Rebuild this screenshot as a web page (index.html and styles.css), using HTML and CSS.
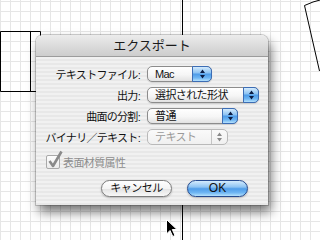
FILE: index.html
```html
<!DOCTYPE html>
<html lang="ja">
<head>
<meta charset="UTF-8" />
<title>エクスポート</title>
<link rel="stylesheet" href="styles.css">
</head>
<body>
<div class="desk">
    <!-- drawing on the canvas -->
    <svg class="drawing" width="320" height="240" viewBox="0 0 320 240">
        <path d="M0.5 31.5 H40.5 V91.5 H0.5 Z M30.5 31.5 V91.5" />
        <path d="M182.5 0 V240" />
        <path d="M304.5 5.5 L313 2 L320 0 M304.5 5.5 L319.5 71" />
    </svg>

    <div class="dialog">
        <div class="titlebar">エクスポート</div>
        <div class="sheet">
            <div class="form">
                <label>テキストファイル:</label>
                <div class="popup w-mac"><span>Mac</span><i class="gem wide"><svg width="7" height="10" viewBox="0 0 7 10"><path d="M3.5 0.5 L6 4 H1 Z M3.5 9.5 L6 6 H1 Z"/></svg></i></div>

                <label>出力:</label>
                <div class="popup w-out"><span>選択された形状</span><i class="gem"><svg width="7" height="10" viewBox="0 0 7 10"><path d="M3.5 0.5 L6 4 H1 Z M3.5 9.5 L6 6 H1 Z"/></svg></i></div>

                <label>曲面の分割:</label>
                <div class="popup w-div"><span>普通</span><i class="gem"><svg width="7" height="10" viewBox="0 0 7 10"><path d="M3.5 0.5 L6 4 H1 Z M3.5 9.5 L6 6 H1 Z"/></svg></i></div>

                <label>バイナリ／テキスト:</label>
                <div class="popup w-bin off"><span>テキスト</span><i class="gem"><svg width="7" height="10" viewBox="0 0 7 10"><path d="M3.5 0.5 L6 4 H1 Z M3.5 9.5 L6 6 H1 Z"/></svg></i></div>
            </div>

            <label class="check">
                <span class="box"><svg width="16" height="19" viewBox="0 0 16 19"><path d="M2.5 11 L6 16 L14.5 1.5" /></svg></span>
                表面材質属性
            </label>

            <div class="buttons">
                <button class="btn">キャンセル</button>
                <button class="btn default">OK</button>
            </div>
        </div>
    </div>

    <svg class="cursor" width="12" height="19" viewBox="0 0 12 19">
        <path d="M0.5 0.5 V15 L4 11.5 L6.8 17.5 L9 16.5 L6.3 10.5 H11 Z" />
    </svg>
</div>
</body>
</html>
```

FILE: styles.css
```css
:root{
    --ui:"Liberation Sans","Noto Sans CJK JP",sans-serif;
    --aqua:linear-gradient(#d4ebfd 0%,#8fc4f3 40%,#4f9de9 52%,#6fb6f3 78%,#b6e2fd 100%);
}
body{margin:0;font-family:var(--ui);color:#111}

.desk{
    position:relative;
    width:320px;height:240px;overflow:hidden;
    background-color:#fff;
    background-image:
        linear-gradient(to right,#e6e6e6 1px,transparent 1px),
        linear-gradient(to bottom,#e6e6e6 1px,transparent 1px);
    background-size:10px 10px;
    background-position:0 1px;
}
.drawing{position:absolute;left:0;top:0}
.drawing path{fill:none;stroke:#000;stroke-width:1}

/* ── Dialog window ── */
.dialog{
    position:absolute;left:36px;top:35px;
    width:232px;height:170px;
    display:flex;flex-direction:column;
    border-radius:7px 7px 0 0;
    overflow:hidden;
    box-shadow:0 0 0 1px rgba(0,0,0,.18),3px 7px 12px rgba(0,0,0,.55);
}
.titlebar{
    height:21px;line-height:21px;
    text-align:center;font-size:13px;color:#1a1a1a;
    background:linear-gradient(#ececec,#dcdcdc 50%,#cdcdcd);
    border-bottom:1px solid #9c9c9c;
}
.sheet{
    flex:1;
    display:flex;flex-direction:column;
    padding:9px 20px 8px 10px;
    background:repeating-linear-gradient(to bottom,#f1f1f1 0 2px,#e8e8e8 2px 4px);
}

/* ── Form rows ── */
.form{
    display:grid;
    grid-template-columns:94px auto;
    column-gap:7px;row-gap:5px;
    align-items:center;justify-items:start;
}
.form label{justify-self:end;font-size:11px;letter-spacing:-.7px;white-space:nowrap}

.popup{
    height:16px;box-sizing:border-box;
    display:flex;align-items:stretch;
    border:1px solid #8c8c8c;border-radius:5px;
    background:linear-gradient(#fff,#f6f6f6 55%,#e2e2e2);
    font-size:11px;line-height:14px;
    box-shadow:0 1px 1px rgba(0,0,0,.12);
}
.popup span{flex:1;padding-left:7px;white-space:nowrap;letter-spacing:-.6px}
.w-mac{width:65px}
.w-out{width:112px}
.w-div{width:91px}
.w-bin{width:81px}

.gem{
    width:14px;margin:-1px -1px -1px 0;
    display:flex;align-items:center;justify-content:center;
    background:var(--aqua);
    border:1px solid #3c6db5;border-radius:0 5px 5px 0;
}
.gem.wide{width:18px}
.gem svg path{fill:#0c1d44}

.popup.off{border-color:#b9b9b9;color:#9a9a9a;background:linear-gradient(#fafafa,#f0f0f0);box-shadow:none}
.popup.off .gem{background:none;border:0;border-left:1px solid #c4c4c4;border-radius:0;margin:0;width:15px}
.popup.off .gem svg path{fill:#8a8a8a}

/* ── Checkbox ── */
.check{
    display:flex;align-items:center;gap:3px;
    margin-top:9px;
    font-size:11px;letter-spacing:-.6px;color:#8d8d8d;
}
.box{
    position:relative;
    width:14px;height:14px;box-sizing:border-box;
    border:1px solid #a9a9a9;border-radius:2px;
    background:linear-gradient(#fdfdfd,#ececec);
}
.box svg{position:absolute;left:0;top:-6px}
.box svg path{fill:none;stroke:#8a8a8a;stroke-width:2.6;stroke-linejoin:round}

/* ── Buttons ── */
.buttons{margin-top:auto;display:flex;justify-content:flex-end;gap:15px}
.btn{
    height:17px;padding:0;
    border:1px solid #7d7d7d;border-radius:9px;
    font-family:var(--ui);font-size:11px;line-height:15px;letter-spacing:-.5px;color:#111;
    background:linear-gradient(#fff,#f4f4f4 50%,#e4e4e4 55%,#f8f8f8);
    box-shadow:0 1px 2px rgba(0,0,0,.25);
    width:71px;
}
.btn.default{width:61px;border-color:#254a8f;background:var(--aqua);font-size:12px;letter-spacing:0}

.cursor{position:absolute;left:166px;top:219px}
.cursor path{fill:#000;stroke:#fff;stroke-width:1}
```
